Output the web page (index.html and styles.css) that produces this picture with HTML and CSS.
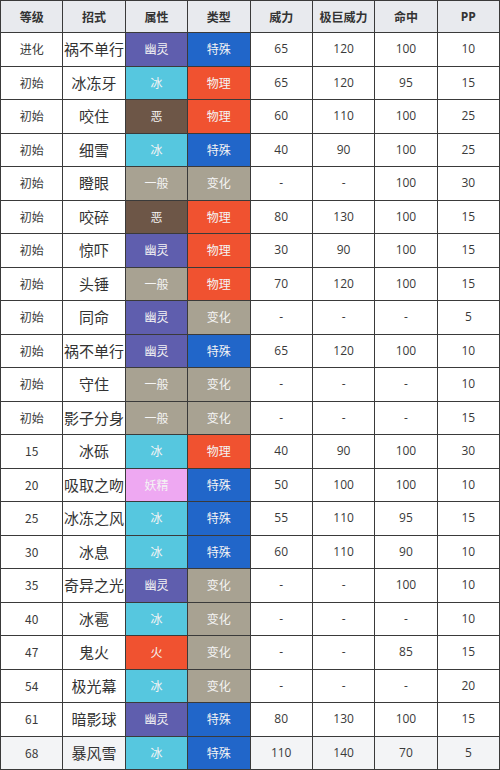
FILE: index.html
```html
<!DOCTYPE html>
<html>
<head>
<meta charset="utf-8">
<link rel="stylesheet" href="styles.css">
</head>
<body>
<table class="moves">
<thead>
<tr><th>等级</th><th>招式</th><th>属性</th><th>类型</th><th>威力</th><th>极巨威力</th><th>命中</th><th class="pp">PP</th></tr>
</thead>
<tbody>
<tr><td class="lv">进化</td><td class="nm">祸不单行</td><td class="t ghost">幽灵</td><td class="t spec">特殊</td><td>65</td><td>120</td><td>100</td><td>10</td></tr>
<tr><td class="lv">初始</td><td class="nm">冰冻牙</td><td class="t ice">冰</td><td class="t phys">物理</td><td>65</td><td>120</td><td>95</td><td>15</td></tr>
<tr><td class="lv">初始</td><td class="nm">咬住</td><td class="t dark">恶</td><td class="t phys">物理</td><td>60</td><td>110</td><td>100</td><td>25</td></tr>
<tr><td class="lv">初始</td><td class="nm">细雪</td><td class="t ice">冰</td><td class="t spec">特殊</td><td>40</td><td>90</td><td>100</td><td>25</td></tr>
<tr><td class="lv">初始</td><td class="nm">瞪眼</td><td class="t normal">一般</td><td class="t status">变化</td><td>-</td><td>-</td><td>100</td><td>30</td></tr>
<tr><td class="lv">初始</td><td class="nm">咬碎</td><td class="t dark">恶</td><td class="t phys">物理</td><td>80</td><td>130</td><td>100</td><td>15</td></tr>
<tr><td class="lv">初始</td><td class="nm">惊吓</td><td class="t ghost">幽灵</td><td class="t phys">物理</td><td>30</td><td>90</td><td>100</td><td>15</td></tr>
<tr><td class="lv">初始</td><td class="nm">头锤</td><td class="t normal">一般</td><td class="t phys">物理</td><td>70</td><td>120</td><td>100</td><td>15</td></tr>
<tr><td class="lv">初始</td><td class="nm">同命</td><td class="t ghost">幽灵</td><td class="t status">变化</td><td>-</td><td>-</td><td>-</td><td>5</td></tr>
<tr><td class="lv">初始</td><td class="nm">祸不单行</td><td class="t ghost">幽灵</td><td class="t spec">特殊</td><td>65</td><td>120</td><td>100</td><td>10</td></tr>
<tr><td class="lv">初始</td><td class="nm">守住</td><td class="t normal">一般</td><td class="t status">变化</td><td>-</td><td>-</td><td>-</td><td>10</td></tr>
<tr><td class="lv">初始</td><td class="nm">影子分身</td><td class="t normal">一般</td><td class="t status">变化</td><td>-</td><td>-</td><td>-</td><td>15</td></tr>
<tr><td class="lv">15</td><td class="nm">冰砾</td><td class="t ice">冰</td><td class="t phys">物理</td><td>40</td><td>90</td><td>100</td><td>30</td></tr>
<tr><td class="lv">20</td><td class="nm">吸取之吻</td><td class="t fairy">妖精</td><td class="t spec">特殊</td><td>50</td><td>100</td><td>100</td><td>10</td></tr>
<tr><td class="lv">25</td><td class="nm">冰冻之风</td><td class="t ice">冰</td><td class="t spec">特殊</td><td>55</td><td>110</td><td>95</td><td>15</td></tr>
<tr><td class="lv">30</td><td class="nm">冰息</td><td class="t ice">冰</td><td class="t spec">特殊</td><td>60</td><td>110</td><td>90</td><td>10</td></tr>
<tr><td class="lv">35</td><td class="nm">奇异之光</td><td class="t ghost">幽灵</td><td class="t status">变化</td><td>-</td><td>-</td><td>100</td><td>10</td></tr>
<tr><td class="lv">40</td><td class="nm">冰雹</td><td class="t ice">冰</td><td class="t status">变化</td><td>-</td><td>-</td><td>-</td><td>10</td></tr>
<tr><td class="lv">47</td><td class="nm">鬼火</td><td class="t fire">火</td><td class="t status">变化</td><td>-</td><td>-</td><td>85</td><td>15</td></tr>
<tr><td class="lv">54</td><td class="nm">极光幕</td><td class="t ice">冰</td><td class="t status">变化</td><td>-</td><td>-</td><td>-</td><td>20</td></tr>
<tr><td class="lv">61</td><td class="nm">暗影球</td><td class="t ghost">幽灵</td><td class="t spec">特殊</td><td>80</td><td>130</td><td>100</td><td>15</td></tr>
<tr class="last"><td class="lv">68</td><td class="nm">暴风雪</td><td class="t ice">冰</td><td class="t spec">特殊</td><td>110</td><td>140</td><td>70</td><td>5</td></tr>
</tbody>
</table>
</body>
</html>
```
FILE: styles.css
```css
html, body {
  margin: 0;
  padding: 0;
  background: #ffffff;
}
body {
  font-family: "Noto Sans CJK SC", "Noto Sans", sans-serif;
  color: #333333;
}
.moves {
  width: 500px;
  height: 770px;
  border-collapse: collapse;
  table-layout: fixed;
}
.moves th,
.moves td {
  border: 1px solid #3a3a3a;
  text-align: center;
  vertical-align: middle;
  padding: 0;
  font-size: 12px;
  line-height: 16px;
}
.moves th {
  background: #e8eaee;
  font-weight: bold;
  color: #333333;
  height: 31px;
}
.moves th.pp {
  font-family: "Open Sans", "Noto Sans", sans-serif;
  font-weight: 700;
}
.moves td {
  font-family: "Open Sans", "Noto Sans CJK SC", sans-serif;
  color: #3a3a3a;
}
.moves td.lv {
  font-family: "Noto Sans CJK SC", sans-serif;
  font-size: 12px;
}
.moves td.nm {
  font-family: "Noto Sans CJK SC", sans-serif;
  font-size: 15px;
  color: #333333;
}
.moves td.t {
  font-family: "Noto Sans CJK SC", sans-serif;
  color: #f4f4f4;
  font-size: 12px;
}
.ghost { background: #5f5eae; }
.spec { background: #2166c9; }
.ice { background: #56c7df; }
.phys { background: #f05230; }
.dark { background: #6d5647; }
.normal { background: #a8a292; }
.status { background: #a8a292; }
.fairy { background: #eea8f2; }
.fire { background: #f05230; }
.last td { background: #f3f4f6; }
.last td.t.ice { background: #56c7df; }
.last td.t.spec { background: #2166c9; }
```
